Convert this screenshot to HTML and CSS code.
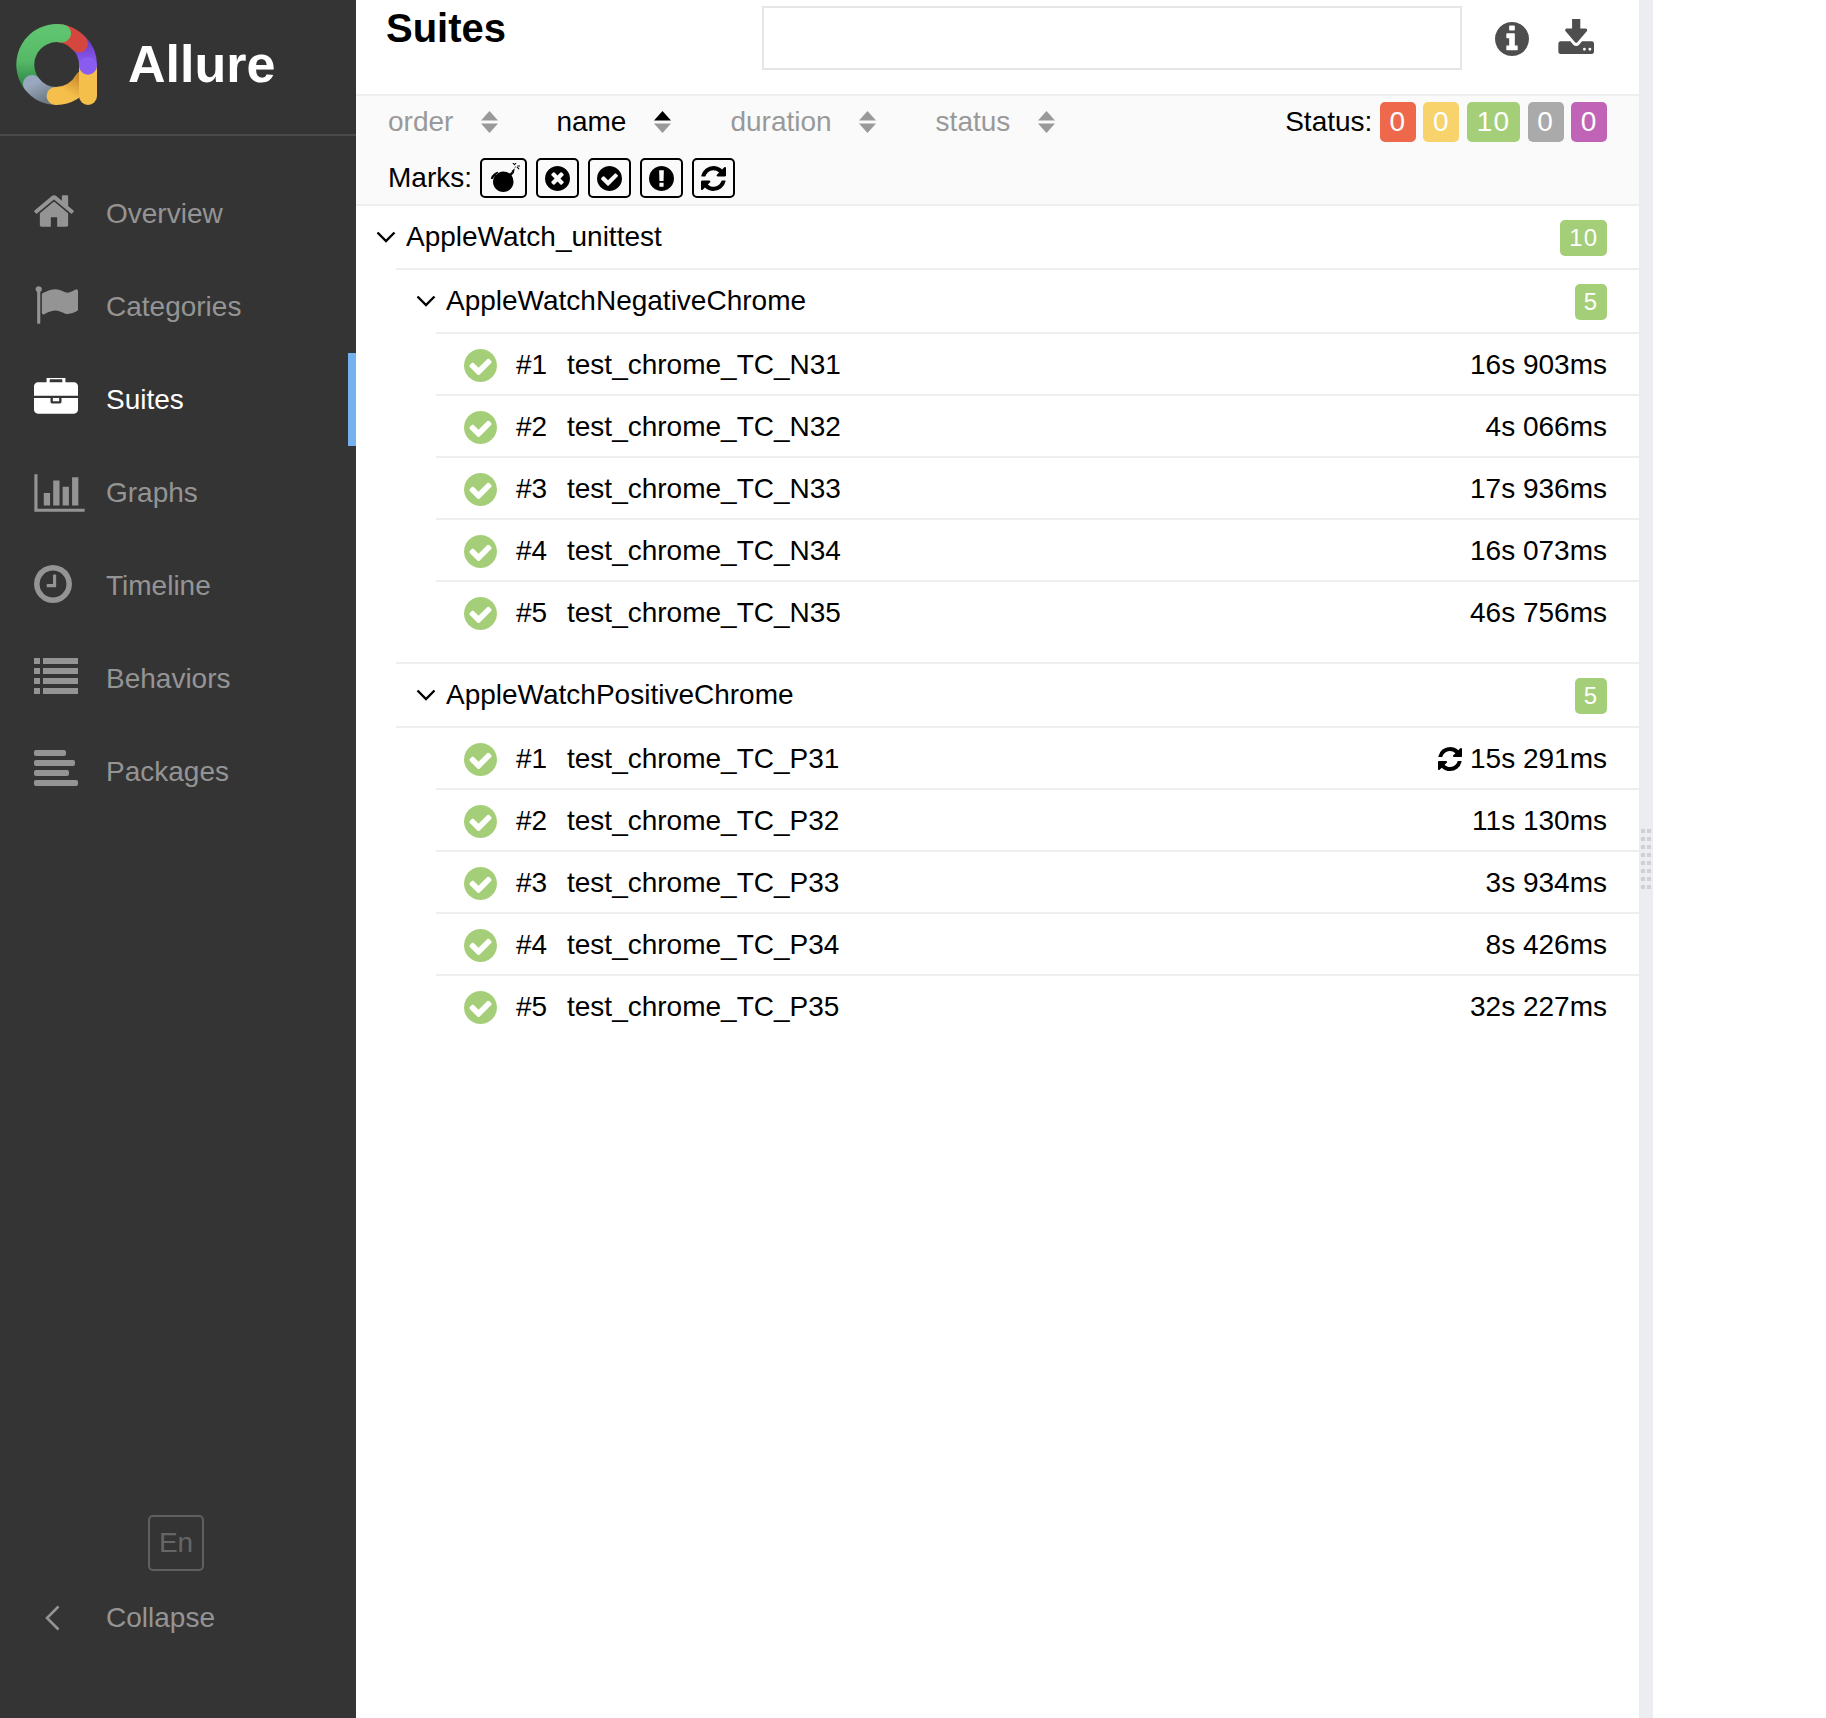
FILE: index.html
```html
<!DOCTYPE html>
<html><head>
<title>Allure Report</title>
<link rel="stylesheet" href="styles.css">
</head>
<body>
<svg class="sprite">
	<symbol id="i-home" viewBox="0 0 1792 1792"><path d="M1472 992v480q0 26-19 45t-45 19h-384v-384h-256v384h-384q-26 0-45-19t-19-45v-480q0-1 .5-3t.5-3l575-474 575 474q1 2 1 6zm223-69l-62 74q-8 9-21 11h-3q-13 0-21-7l-692-577-692 577q-12 8-24 7-13-2-21-11l-62-74q-8-10-7-23.500t11-21.500l719-599q32-26 76-26t76 26l244 204v-195q0-14 9-23t23-9h192q14 0 23 9t9 23v408l219 182q10 8 11 21.500t-7 23.500z"/></symbol>
	<symbol id="i-flag" viewBox="0 0 1792 1792"><path d="M320 256q0 72-64 110v1266q0 13-9.500 22.500t-22.500 9.500h-64q-13 0-22.500-9.500t-9.500-22.500v-1266q-64-38-64-110 0-53 37.500-90.500t90.500-37.500 90.500 37.500 37.500 90.500zm1472 64v763q0 25-12.500 38.500t-39.500 27.500q-215 116-369 116-61 0-123.500-22t-108.500-48-115.500-48-142.500-22q-192 0-464 146-17 9-33 9-26 0-45-19t-19-45v-742q0-32 31-55 21-14 79-43 236-120 421-120 107 0 200 29t219 88q38 19 88 19 54 0 117.500-21t110-47 88-47 54.500-21q26 0 45 19t19 45z"/></symbol>
	<symbol id="i-case" viewBox="0 0 1792 1792"><path d="M640 256h512v-128h-512v128zm1152 640v480q0 66-47 113t-113 47h-1472q-66 0-113-47t-47-113v-480h672v160q0 26 19 45t45 19h320q26 0 45-19t19-45v-160h672zm-768 0v128h-256v-128h256zm768-480v384h-1792v-384q0-66 47-113t113-47h352v-160q0-40 28-68t68-28h576q40 0 68 28t28 68v160h352q66 0 113 47t47 113z"/></symbol>
	<symbol id="i-chart" viewBox="0 0 2048 1792"><path d="M640 896v512h-256v-512h256zm384-512v1024h-256v-1024h256zm1024 1152v128h-2048v-1536h128v1408h1920zm-640-896v768h-256v-768h256zm384-384v1152h-256v-1152h256z"/></symbol>
	<symbol id="i-clock" viewBox="128 128 1536 1536"><path d="M1024 544v448q0 14-9 23t-23 9h-320q-14 0-23-9t-9-23v-64q0-14 9-23t23-9h224v-352q0-14 9-23t23-9h64q14 0 23 9t9 23zm416 352q0-148-73-273t-198-198-273-73-273 73-198 198-73 273 73 273 198 198 273 73 273-73 198-198 73-273zm224 0q0 209-103 385.500t-279.500 279.500-385.500 103-385.500-103-279.500-279.500-103-385.500 103-385.500 279.500-279.500 385.500-103 385.500 103 279.500 279.500 103 385.500z"/></symbol>
	<symbol id="i-list" viewBox="0 0 44 36"><path d="M0 0h6v6H0zM9 0h35v6H9zM0 10h6v6H0zM9 10h35v6H9zM0 20h6v6H0zM9 20h35v6H9zM0 30h6v6H0zM9 30h35v6H9z"/></symbol>
	<symbol id="i-align" viewBox="0 0 44 36"><rect width="32" height="6" rx="2"/><rect y="10" width="41" height="6" rx="2"/><rect y="20" width="35" height="6" rx="2"/><rect y="30" width="44" height="6" rx="2"/></symbol>
	<symbol id="i-info" viewBox="128 128 1536 1536"><path d="M1152 1376v-160q0-14-9-23t-23-9h-96v-512q0-14-9-23t-23-9h-320q-14 0-23 9t-9 23v160q0 14 9 23t23 9h96v320h-96q-14 0-23 9t-9 23v160q0 14 9 23t23 9h448q14 0 23-9t9-23zm-128-896v-160q0-14-9-23t-23-9h-192q-14 0-23 9t-9 23v160q0 14 9 23t23 9h192q14 0 23-9t9-23zm640 416q0 209-103 385.500t-279.500 279.500-385.500 103-385.500-103-279.500-279.500-103-385.500 103-385.500 279.500-279.500 385.500-103 385.500 103 279.500 279.500 103 385.500z"/></symbol>
	<symbol id="i-down" viewBox="0 128 1728 1408" preserveAspectRatio="none"><path d="M1344 1344q0-26-19-45t-45-19-45 19-19 45 19 45 45 19 45-19 19-45zm256 0q0-26-19-45t-45-19-45 19-19 45 19 45 45 19 45-19 19-45zm128-224v320q0 40-28 68t-68 28h-1472q-40 0-68-28t-28-68v-320q0-40 28-68t68-28h465l135 136q58 56 136 56t136-56l136-136h464q40 0 68 28t28 68zm-325-569q17 41-14 70l-448 448q-18 19-45 19t-45-19l-448-448q-31-29-14-70 17-39 59-39h256v-448q0-26 19-45t45-19h256q26 0 45 19t19 45v448h256q42 0 59 39z"/></symbol>
	<symbol id="i-bomb" viewBox="0 64 1792 1664"><path d="M571 589q-10-25-34-35t-49 0q-108 44-191 127t-127 191q-10 25 0 49t35 34q13 5 24 5 42 0 60-40 34-84 98.500-148.500t148.500-98.500q25-11 35-35t0-49zm942-356l46 46-244 243 68 68q19 19 19 45.500t-19 45.500l-64 64q110 166 110 367 0 116-45 222t-123 184-184 123-222 45-222-45-184-123-123-184-45-222 45-222 123-184 184-123 222-45q201 0 367 110l64-64q19-19 45.500-19t45.500 19l68 68zm8-56q-10 10-23 10-12 0-23-10l-91-90q-9-10-9-23t9-23q10-9 23-9t23 9l91 91q9 9 9 22.500t-9 22.500zm228 228q-11 9-23 9t-23-9l-90-91q-10-9-10-22.500t10-22.500q9-10 22.500-10t22.500 10l91 90q9 10 9 23t-9 23zm55-183q0 14-9 23t-23 9h-96q-14 0-23-9t-9-23 9-23 23-9h96q14 0 23 9t9 23zm-224-224v96q0 14-9 23t-23 9-23-9-9-23v-96q0-14 9-23t23-9 23 9 9 23z"/></symbol>
	<symbol id="i-times" viewBox="128 128 1536 1536"><path d="M1277 1122q0-26-19-45l-181-181 181-181q19-19 19-45 0-27-19-46l-90-90q-19-19-46-19-26 0-45 19l-181 181-181-181q-19-19-45-19-27 0-46 19l-90 90q-19 19-19 46 0 26 19 45l181 181-181 181q-19 19-19 45 0 27 19 46l90 90q19 19 46 19 26 0 45-19l181-181 181 181q19 19 45 19 27 0 46-19l90-90q19-19 19-46zm387-226q0 209-103 385.500t-279.500 279.500-385.500 103-385.500-103-279.500-279.500-103-385.500 103-385.500 279.500-279.500 385.500-103 385.500 103 279.500 279.500 103 385.500z"/></symbol>
	<symbol id="i-check" viewBox="128 128 1536 1536"><path d="M1412 734q0-28-18-46l-91-90q-19-19-45-19t-45 19l-408 407-226-226q-19-19-45-19t-45 19l-91 90q-18 18-18 46 0 27 18 45l362 362q19 19 45 19 27 0 46-19l543-543q18-18 18-45zm252 162q0 209-103 385.500t-279.500 279.500-385.500 103-385.500-103-279.500-279.500-103-385.500 103-385.500 279.500-279.500 385.500-103 385.500 103 279.500 279.500 103 385.500z"/></symbol>
	<symbol id="i-excl" viewBox="128 128 1536 1536"><path d="M896 128q209 0 385.500 103t279.500 279.500 103 385.500-103 385.500-279.500 279.500-385.500 103-385.500-103-279.500-279.500-103-385.500 103-385.500 279.500-279.500 385.500-103zm128 1247v-190q0-14-9-23.500t-22-9.500h-192q-13 0-23 10t-10 23v190q0 13 10 23t23 10h192q13 0 22-9.500t9-23.500zm-2-344l18-621q0-12-10-18-10-8-24-8h-220q-14 0-24 8-10 6-10 18l17 621q0 10 10 17.500t24 7.500h185q14 0 23.500-7.500t10.500-17.500z"/></symbol>
	<symbol id="i-retry" viewBox="128 128 1536 1536"><path d="M1639 1056q0 5-1 7-64 268-268 434.500t-478 166.500q-146 0-282.500-55t-243.500-157l-129 129q-19 19-45 19t-45-19-19-45v-448q0-26 19-45t45-19h448q26 0 45 19t19 45-19 45l-137 137q71 66 161 102t187 36q134 0 250-65t186-179q11-17 53-117 8-23 30-23h192q13 0 22.500 9.500t9.500 22.500zm25-800v448q0 26-19 45t-45 19h-448q-26 0-45-19t-19-45 19-45l138-138q-148-137-349-137-134 0-250 65t-186 179q-11 17-53 117-8 23-30 23h-199q-13 0-22.500-9.500t-9.500-22.500v-7q65-268 270-434.500t480-166.500q146 0 284 55.500t245 156.500l130-129q19-19 45-19t45 19 19 45z"/></symbol>
	<symbol id="i-sort" viewBox="0 0 17 22"><path class="up" d="M8.500 0L17 9.500H0z"/><path class="dn" d="M0 12.500h17L8.500 22z"/></symbol>
	<symbol id="i-chev" viewBox="0 0 20 12"><path d="M1.500 1.500L10 10l8.500-8.500" fill="none" stroke="currentColor" stroke-width="2.400"/></symbol>
</svg>

<div class="app">
	<div class="side">
		<div class="brand">
			<svg class="logo" viewBox="0 0 81 81" fill="none" stroke-width="18" stroke-linecap="round">
				<defs>
					<linearGradient id="g-green" x1="0" y1="0" x2="0" y2="1"><stop offset="0" stop-color="#5fc46f"/><stop offset=".55" stop-color="#55b866"/><stop offset="1" stop-color="#2f8a49"/></linearGradient>
					<linearGradient id="g-grey" x1="0" y1="0" x2="1" y2="1"><stop offset="0" stop-color="#9aa8bf"/><stop offset="1" stop-color="#6d7a84"/></linearGradient>
					<linearGradient id="g-yellow" x1="0" y1="1" x2="1" y2="0"><stop offset=".3" stop-color="#f5bf4b"/><stop offset="1" stop-color="#c98a2c"/></linearGradient>
					<linearGradient id="g-purple" x1="0" y1="0" x2="0" y2="1"><stop offset="0" stop-color="#6f3fd0"/><stop offset="1" stop-color="#8a5cf0"/></linearGradient>
				</defs>
				<path stroke="url(#g-purple)" d="M63 19 A31.500 31.500 0 0 1 72 41"/>
				<path stroke="#d5473e" d="M40 9 A31.500 31.500 0 0 1 63 19.500"/>
				<path stroke="url(#g-green)" d="M46 9.500 A31.500 31.500 0 0 0 16 60"/>
				<path stroke="url(#g-grey)" d="M16 60 A31.500 31.500 0 0 0 40 72"/>
				<path stroke="url(#g-yellow)" d="M39.600 72 A31.500 31.500 0 0 0 68 55"/>
				<path stroke="#f5bf4b" d="M72 45 V72"/>
				<circle cx="72" cy="41.700" r="9" fill="#8a5cf0" stroke="none"/>
			</svg>
			<span class="brand-name">Allure</span>
		</div>
		<ul class="nav">
			<li><svg class="nav-ico"><use href="#i-home" x="-2" y="-3"/></svg>Overview</li>
			<li><svg class="nav-ico"><use href="#i-flag" y="-2"/></svg>Categories</li>
			<li class="on"><svg class="nav-ico"><use href="#i-case" y="-2"/></svg>Suites</li>
			<li><svg class="nav-ico wide"><use href="#i-chart"/></svg>Graphs</li>
			<li><svg class="nav-ico clock"><use href="#i-clock"/></svg>Timeline</li>
			<li><svg class="nav-ico"><use href="#i-list" y="-3"/></svg>Behaviors</li>
			<li><svg class="nav-ico"><use href="#i-align" y="-4"/></svg>Packages</li>
		</ul>
		<div class="side-foot">
			<div class="lang">En</div>
			<div class="collapse"><svg class="back" viewBox="0 0 16 26"><path d="M14.500 1.500L3 13l11.500 11.500" fill="none" stroke="currentColor" stroke-width="2.600"/></svg>Collapse</div>
		</div>
	</div>

	<div class="pane">
		<div class="head">
			<h2>Suites</h2>
			<input class="search" type="text">
			<svg class="head-ico info"><use href="#i-info"/></svg>
			<svg class="head-ico dl"><use href="#i-down"/></svg>
		</div>
		<div class="filters">
			<div class="filter-row">
				<span class="sorter s-order">order<svg class="sort"><use href="#i-sort"/></svg></span>
				<span class="sorter s-name on">name<svg class="sort"><use href="#i-sort"/></svg></span>
				<span class="sorter s-dur">duration<svg class="sort"><use href="#i-sort"/></svg></span>
				<span class="sorter s-status">status<svg class="sort"><use href="#i-sort"/></svg></span>
				<div class="status">Status:
					<span class="pill red">0</span>
					<span class="pill yellow">0</span>
					<span class="pill green">10</span>
					<span class="pill grey">0</span>
					<span class="pill purple">0</span>
				</div>
			</div>
			<div class="marks">Marks:
				<span class="mark bomb"><svg><use href="#i-bomb"/></svg></span>
				<span class="mark"><svg><use href="#i-times"/></svg></span>
				<span class="mark"><svg><use href="#i-check"/></svg></span>
				<span class="mark"><svg><use href="#i-excl"/></svg></span>
				<span class="mark"><svg><use href="#i-retry"/></svg></span>
			</div>
		</div>

		<div class="tree">
			<div class="node lvl0"><svg class="chev"><use href="#i-chev"/></svg>AppleWatch_unittest<span class="count">10</span></div>

			<div class="node lvl1"><svg class="chev"><use href="#i-chev"/></svg>AppleWatchNegativeChrome<span class="count">5</span></div>
			<div class="leaf"><svg class="ok"><use href="#i-check"/></svg><span class="num">#1</span>test_chrome_TC_N31<span class="dur">16s 903ms</span></div>
			<div class="leaf"><svg class="ok"><use href="#i-check"/></svg><span class="num">#2</span>test_chrome_TC_N32<span class="dur">4s 066ms</span></div>
			<div class="leaf"><svg class="ok"><use href="#i-check"/></svg><span class="num">#3</span>test_chrome_TC_N33<span class="dur">17s 936ms</span></div>
			<div class="leaf"><svg class="ok"><use href="#i-check"/></svg><span class="num">#4</span>test_chrome_TC_N34<span class="dur">16s 073ms</span></div>
			<div class="leaf last"><svg class="ok"><use href="#i-check"/></svg><span class="num">#5</span>test_chrome_TC_N35<span class="dur">46s 756ms</span></div>

			<div class="node lvl1 next"><svg class="chev"><use href="#i-chev"/></svg>AppleWatchPositiveChrome<span class="count">5</span></div>
			<div class="leaf"><svg class="ok"><use href="#i-check"/></svg><span class="num">#1</span>test_chrome_TC_P31<span class="dur"><svg class="retry"><use href="#i-retry"/></svg>15s 291ms</span></div>
			<div class="leaf"><svg class="ok"><use href="#i-check"/></svg><span class="num">#2</span>test_chrome_TC_P32<span class="dur">11s 130ms</span></div>
			<div class="leaf"><svg class="ok"><use href="#i-check"/></svg><span class="num">#3</span>test_chrome_TC_P33<span class="dur">3s 934ms</span></div>
			<div class="leaf"><svg class="ok"><use href="#i-check"/></svg><span class="num">#4</span>test_chrome_TC_P34<span class="dur">8s 426ms</span></div>
			<div class="leaf last"><svg class="ok"><use href="#i-check"/></svg><span class="num">#5</span>test_chrome_TC_P35<span class="dur">32s 227ms</span></div>
		</div>
	</div>

	<div class="split"><div class="grip"></div></div>
</div>
</body></html>
```

FILE: styles.css
```css
*{box-sizing:border-box;}
html,body{height:100%;}
body{margin:0;background:#fff;color:#000;font:28px/1.2 "Liberation Sans",Arial,sans-serif;}
.sprite{display:none;}
.app{display:flex;height:1718px;}

/* sidebar */
.side{width:356px;flex:none;background:#343434;color:#949494;display:flex;flex-direction:column;}
.brand{height:136px;border-bottom:2px solid #4a4a4a;padding:24px 0 0 16px;display:flex;align-items:flex-start;}
.logo{width:81px;height:81px;flex:none;}
.brand-name{margin-left:31px;margin-top:9px;font-size:52px;font-weight:bold;color:#fff;line-height:62px;}
.nav{list-style:none;margin:31px 0 0;padding:0;}
.nav li{height:93px;display:flex;align-items:center;padding-left:34px;}
.nav li.on{color:#fff;background:linear-gradient(to left,#75b1ee 8px,transparent 8px);}
.nav-ico{width:44px;height:44px;fill:currentColor;margin-right:28px;flex:none;}
.nav-ico.wide{width:51px;margin-right:21px;}
.nav-ico.clock{width:38px;height:38px;margin:-3px 34px 0 0;}
.side-foot{margin-top:auto;padding-bottom:78px;}
.lang{width:56px;height:56px;margin:0 0 25px 148px;border:2px solid #5f5f5f;border-radius:5px;color:#666;display:flex;align-items:center;justify-content:center;}
.collapse{display:flex;align-items:center;height:44px;padding-left:44px;}
.back{width:16px;height:26px;margin-right:46px;}

/* right pane */
.pane{width:1283px;flex:none;}
.head{height:96px;border-bottom:2px solid #eee;position:relative;display:flex;align-items:flex-start;padding-left:30px;}
h2{margin:4px 0 0;font-size:40px;line-height:48px;width:376px;}
.search{width:700px;height:64px;margin-top:6px;border:2px solid #e6e6e6;background:#fff;}
.head-ico{fill:#4e4e4e;flex:none;}
.info{width:34px;height:34px;margin:22px 0 0 33px;}
.dl{width:37px;height:35px;margin:19px 0 0 28px;}

.filters{height:110px;background:#fafafa;border-bottom:2px solid #eee;padding:6px 32px 0 32px;}
.filter-row{display:flex;height:40px;align-items:center;color:#999;}
.sorter{display:flex;align-items:center;}
.sorter.on{color:#000;--up:#000;}
.sort{width:17px;height:22px;fill:#999;margin-left:28px;flex:none;}
.s-name{margin-left:58px;}
.s-dur{margin-left:59px;}
.s-dur .sort{margin-left:27px;}
.s-status{margin-left:60px;}
.s-status .sort{margin-left:28px;}
.up{fill:var(--up,#999);}
.status{margin-left:auto;display:flex;align-items:center;color:#000;gap:7.500px;}
.pill{height:40px;min-width:36px;border-radius:5px;color:#fff;display:flex;align-items:center;justify-content:center;letter-spacing:1px;}
.pill.green{padding:0 10px;}
.red{background:#ee694b;}
.yellow{background:#f8d26a;}
.green{background:#a4ce77;}
.grey{background:#aaa;}
.purple{background:#c164b8;}
.marks{display:flex;align-items:center;height:40px;margin-top:16px;gap:9px;}
.mark{width:43px;height:40px;border:2px solid #000;border-radius:5px;display:flex;align-items:center;justify-content:center;}
.mark svg{width:25px;height:25px;}
.mark.bomb{width:47px;margin-left:-1px;}
.mark.bomb svg{width:32px;height:30px;}

/* tree */
.node{height:64px;display:flex;align-items:center;border-bottom:2px solid #eee;padding-right:32px;}
.lvl0{margin-left:40px;padding-left:10px;}
.lvl0 .chev{margin-left:-30px;}
.lvl1{margin-left:80px;padding-left:10px;}
.lvl1 .chev{margin-left:-30px;}
.chev{width:20px;height:12px;margin-right:10px;flex:none;color:#000;}
.next{margin-left:40px;padding-left:50px;border-top:2px solid #eee;margin-top:18px;height:66px;}
.count{margin:2px 0 0 auto;height:36px;min-width:32px;padding:0 9px;border-radius:5px;background:#a4ce77;color:#fff;font-size:24px;letter-spacing:1px;display:flex;align-items:center;justify-content:center;}
.leaf{height:62px;margin-left:80px;padding:2px 32px 0 28px;display:flex;align-items:center;border-bottom:2px solid #eee;}
.leaf.last{border-bottom:0;padding-top:0;}
.ok{width:33px;height:33px;fill:#a4ce77;flex:none;margin-right:19px;}
.num{width:51px;flex:none;}
.dur{margin-left:auto;display:flex;align-items:center;}
.retry{width:24px;height:24px;margin-right:8px;}

/* splitter */
.split{width:14px;flex:none;background:#ecedf0;display:flex;align-items:center;justify-content:center;}
.grip{width:10px;height:60px;background-image:linear-gradient(transparent 4px,#ecedf0 4px),linear-gradient(to right,#d0d1d4 4px,transparent 4px);background-size:6px 8px;}
```
